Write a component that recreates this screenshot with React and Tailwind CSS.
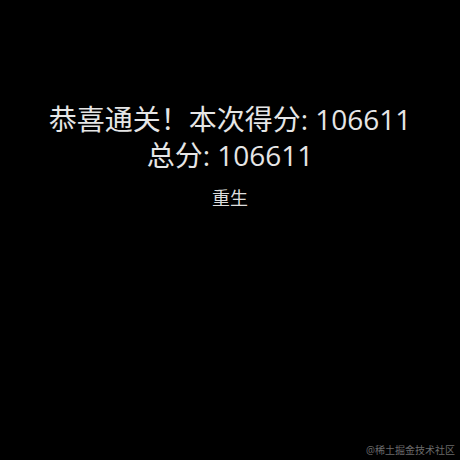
import React from "react";

export default function App() {
  return (
    <div
      className="relative w-[460px] h-[460px] bg-black text-[#e6e6e6] overflow-hidden"
      style={{ fontFamily: '"Open Sans", "Noto Sans CJK SC", sans-serif' }}
    >
      <div className="flex flex-col items-center pt-[101px]">
        <p className="text-[28px] leading-[36px]">恭喜通关！本次得分: 106611</p>
        <p className="text-[28px] leading-[36px]">总分: 106611</p>
        <button className="mt-[13px] text-[18px] leading-[24px] text-[#dddddd]">重生</button>
      </div>
      {/* watermark */}
      <span className="absolute right-[5px] bottom-[5px] text-[10px] leading-none text-[#6b6b6b]">
        @稀土掘金技术社区
      </span>
    </div>
  );
}
